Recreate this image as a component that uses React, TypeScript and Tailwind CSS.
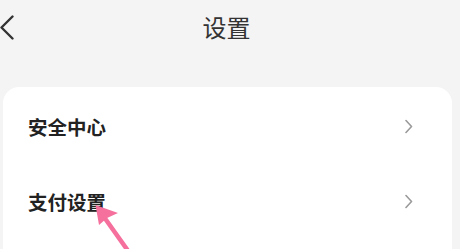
const ROWS = ["安全中心", "支付设置"];

const font = { fontFamily: '"Noto Sans CJK SC", "Noto Sans", sans-serif' };

const Chevron = () => (
  <svg width="8" height="15" viewBox="0 0 8 15" fill="none">
    <path d="M1 1.5 L6.5 7.5 L1 13.5" stroke="#9a9a9a" strokeWidth="1.6" strokeLinecap="round" strokeLinejoin="round" />
  </svg>
);

export default function App() {
  return (
    <div className="relative h-[249px] w-[460px] overflow-hidden bg-[#f4f4f4]" style={font}>
      <div className="relative flex h-[54px] items-center justify-center">
        <svg className="absolute left-0 top-[15px]" width="15" height="26" viewBox="0 0 15 26" fill="none">
          <path d="M12.5 1.5 L1.5 12.5 L12.5 23.5" stroke="#333" strokeWidth="2.4" strokeLinecap="round" strokeLinejoin="round" />
        </svg>
        <h1 className="ml-[-7px] text-[24px] font-normal leading-none text-[#333]">设置</h1>
      </div>

      <div className="ml-[3px] mr-[8px] mt-[33px] rounded-2xl bg-white pb-[60px] pt-[2px]">
        {ROWS.map((r) => (
          <div key={r} className="flex h-[75px] items-center justify-between pl-[25px] pr-[39px]">
            <span className="text-[19.5px] font-bold leading-none text-[#222]">{r}</span>
            <Chevron />
          </div>
        ))}
      </div>

      {/* annotation arrow */}
      <svg className="pointer-events-none absolute left-0 top-0" width="460" height="249" viewBox="0 0 460 249">
        <line x1="104" y1="217" x2="131" y2="255" stroke="#f5709c" strokeWidth="4.5" strokeLinecap="round" />
        <polygon points="95.5,205 118,213 107,218 99,225" fill="#f5709c" />
      </svg>
    </div>
  );
}
